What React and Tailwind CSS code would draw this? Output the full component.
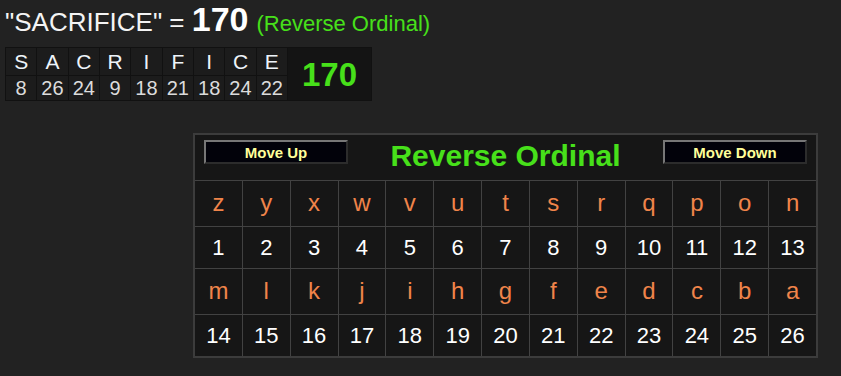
import React from 'react';

const word = [
  ['S', 8], ['A', 26], ['C', 24], ['R', 9], ['I', 18],
  ['F', 21], ['I', 18], ['C', 24], ['E', 22],
];

const alphabet = 'zyxwvutsrqponmlkjihgfedcba'.split('');

function MoveButton({ label }) {
  return (
    <button className="w-[144px] h-[24px] mt-[5px] bg-[#02020a] border-2 border-t-[#777] border-l-[#777] border-b-[#2c2c2c] border-r-[#2c2c2c] text-[#ffff99] text-[15px] font-bold leading-none flex items-center justify-center">
      {label}
    </button>
  );
}

function WordBreakdown() {
  return (
    <div className="ml-[5px] flex w-[367px] h-[54px] bg-[#111] p-px gap-px">
      <div className="w-[281px] grid grid-cols-9 grid-rows-[27px_24px] gap-px">
        {word.map(([ch], i) => (
          <div key={'l' + i} className="bg-[#1c1c1c] flex items-center justify-center text-[21px] text-[#eef4fa] leading-none">
            {ch}
          </div>
        ))}
        {word.map(([, n], i) => (
          <div key={'n' + i} className="bg-[#1c1c1c] flex items-center justify-center text-[20px] text-[#dcdcdc] leading-none">
            {n}
          </div>
        ))}
      </div>
      <div className="flex-1 bg-[#141414] flex items-center justify-center text-[33px] font-bold text-[#47e01a] leading-none">
        170
      </div>
    </div>
  );
}

function CipherChart() {
  const rows = [
    alphabet.slice(0, 13),
    alphabet.slice(0, 13).map((_, i) => i + 1),
    alphabet.slice(13),
    alphabet.slice(13).map((_, i) => i + 14),
  ];

  return (
    <div className="ml-[193px] mt-[32px] w-[625px] border-2 border-[#3c3c3c] bg-[#424242] flex flex-col gap-px">
      <div className="h-[45px] bg-[#161616] flex items-start justify-between px-[9px]">
        <MoveButton label="Move Up" />
        <div className="self-center text-[30px] font-bold text-[#47e01a] leading-none -mt-[3px]">
          Reverse Ordinal
        </div>
        <MoveButton label="Move Down" />
      </div>
      {rows.map((row, r) => (
        <div
          key={r}
          className={`grid grid-cols-[repeat(13,1fr)] gap-px ${r % 2 === 0 ? 'h-[45px]' : 'h-[41px]'}`}
        >
          {row.map((v, c) => (
            <div
              key={c}
              className={`bg-[#161616] flex items-center justify-center leading-none ${
                r % 2 === 0 ? 'text-[24px] text-[#f0844a] pb-px' : 'text-[22px] text-white'
              }`}
            >
              {v}
            </div>
          ))}
        </div>
      ))}
    </div>
  );
}

export default function App() {
  return (
    <div className="w-[841px] h-[376px] bg-[#222] font-['Liberation_Sans',Arial,sans-serif] overflow-hidden">
      <div className="h-[47px] pt-[2px] pl-[5px] flex items-baseline">
        <span className="text-[26px] text-[#f4f4f4] leading-none whitespace-pre">"SACRIFICE" = </span>
        <span className="text-[34px] font-bold text-white leading-none">170</span>
        <span className="text-[22px] text-[#47e01a] leading-none ml-[8px]">(Reverse Ordinal)</span>
      </div>
      <WordBreakdown />
      <CipherChart />
    </div>
  );
}
